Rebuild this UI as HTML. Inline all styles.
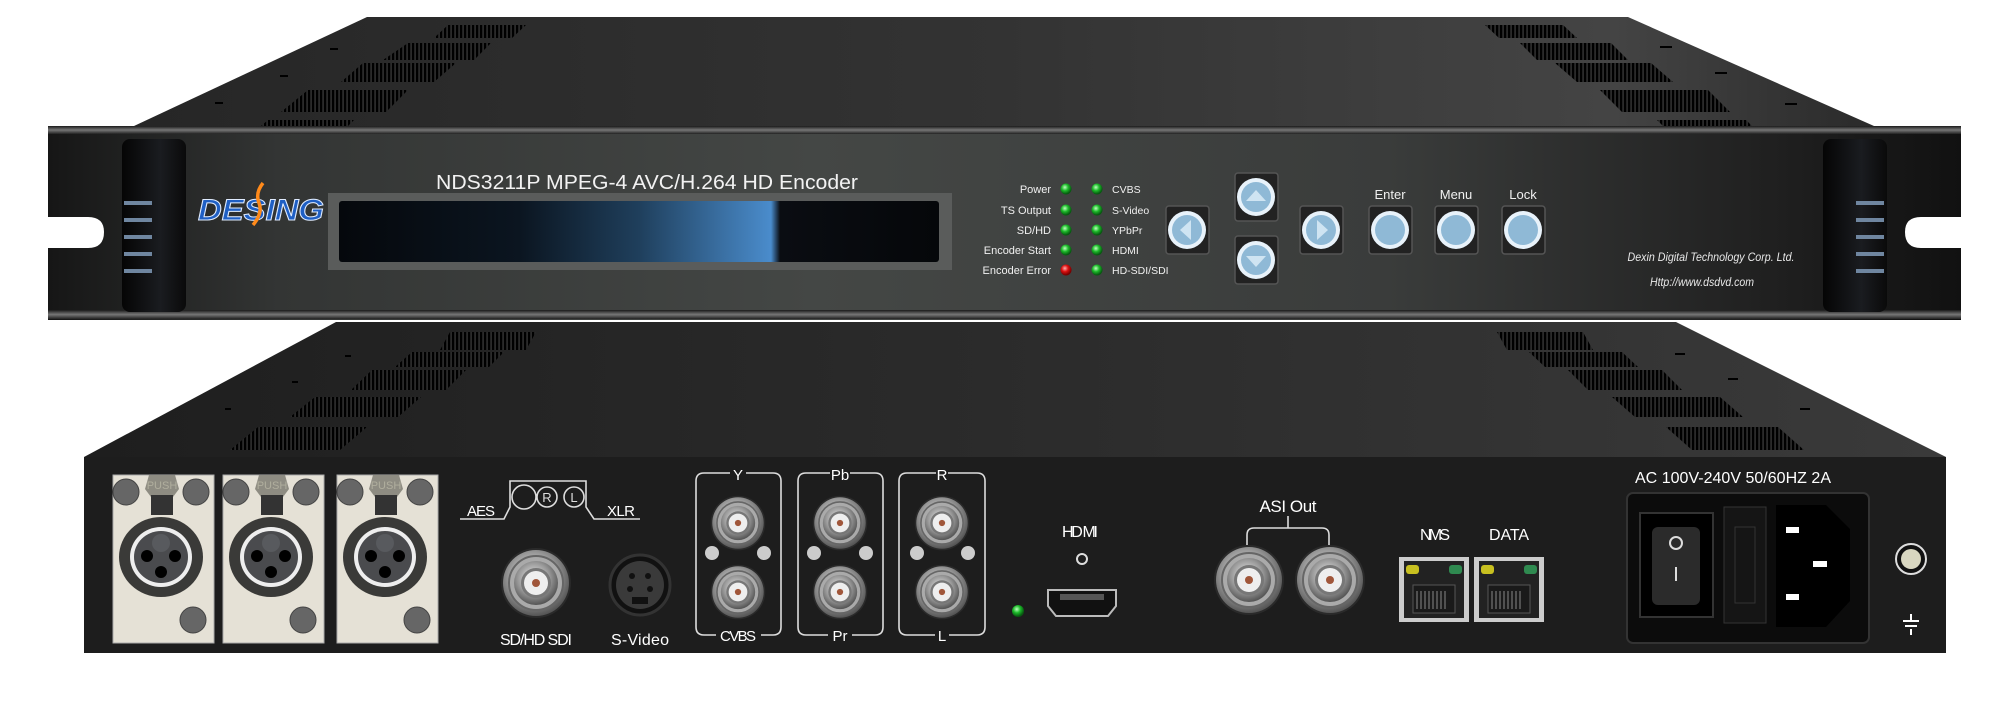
<!DOCTYPE html>
<html><head><meta charset="utf-8"><style>
html,body{margin:0;padding:0;background:#fff;width:2000px;height:701px;overflow:hidden}
svg{display:block}
text{font-family:"Liberation Sans",sans-serif}
</style></head><body>
<svg width="2000" height="701" viewBox="0 0 2000 701" xmlns="http://www.w3.org/2000/svg">
<defs>
<linearGradient id="lid" x1="0" y1="0" x2="1" y2="0">
<stop offset="0" stop-color="#262626"/><stop offset="0.5" stop-color="#333"/><stop offset="0.85" stop-color="#444"/><stop offset="1" stop-color="#2a2a2a"/></linearGradient>
<linearGradient id="lid2" x1="0" y1="0" x2="1" y2="0">
<stop offset="0" stop-color="#1e1e1e"/><stop offset="0.6" stop-color="#2e2e2e"/><stop offset="1" stop-color="#3a3a3a"/></linearGradient>
<linearGradient id="front" x1="0" y1="0" x2="1" y2="0">
<stop offset="0" stop-color="#161616"/><stop offset="0.12" stop-color="#333534"/><stop offset="0.4" stop-color="#444745"/><stop offset="0.7" stop-color="#3a3c3b"/><stop offset="0.9" stop-color="#202020"/><stop offset="1" stop-color="#111"/></linearGradient>
<linearGradient id="rail" x1="0" y1="0" x2="0" y2="1">
<stop offset="0" stop-color="#1a1a1a"/><stop offset="0.5" stop-color="#777"/><stop offset="1" stop-color="#222"/></linearGradient>
<linearGradient id="lcd" x1="0" y1="0" x2="1" y2="0">
<stop offset="0" stop-color="#05080c"/><stop offset="0.3" stop-color="#0b1520"/><stop offset="0.5" stop-color="#1f3f5c"/><stop offset="0.72" stop-color="#4a8ccc"/><stop offset="0.735" stop-color="#0a0d12"/><stop offset="1" stop-color="#05070a"/></linearGradient>
<linearGradient id="ear" x1="0" y1="0" x2="1" y2="0">
<stop offset="0" stop-color="#050505"/><stop offset="0.6" stop-color="#1a1c20"/><stop offset="1" stop-color="#0a0a0a"/></linearGradient>
<pattern id="vent" width="4" height="10" patternUnits="userSpaceOnUse"><rect width="4" height="10" fill="#2a2a2a"/><rect width="2.2" height="10" fill="#000"/></pattern>
<radialGradient id="bncg" cx="0.45" cy="0.4" r="0.6"><stop offset="0" stop-color="#eee"/><stop offset="0.6" stop-color="#999"/><stop offset="1" stop-color="#555"/></radialGradient>
<radialGradient id="led" cx="0.4" cy="0.35" r="0.6"><stop offset="0" stop-color="#bfffc0"/><stop offset="0.5" stop-color="#1dbb2a"/><stop offset="1" stop-color="#075a10"/></radialGradient>
<radialGradient id="ledr" cx="0.4" cy="0.35" r="0.6"><stop offset="0" stop-color="#ffb0b0"/><stop offset="0.5" stop-color="#dd1010"/><stop offset="1" stop-color="#700"/></radialGradient>
<g id="bnc">
<circle r="35" fill="#2a2a2a"/><circle r="33" fill="url(#bncg)"/><circle r="27" fill="#aaa" stroke="#666" stroke-width="2"/>
<circle r="22" fill="url(#bncg)"/><circle r="15" fill="#777"/><circle r="12" fill="#eee"/><circle r="4" fill="#a0563a"/></g>
<g id="btn"><rect x="-21" y="-24" width="43" height="48" rx="3" fill="#222" stroke="#555" stroke-width="1.5"/><circle r="19" fill="#e8f2fa"/><circle r="15" fill="#8fb9d6"/></g>
<g id="xlr">
<rect x="0" y="0" width="101" height="168" fill="#e5e1d6" stroke="#aaa"/>
<circle cx="13" cy="17" r="13" fill="#666" stroke="#444"/><circle cx="83" cy="17" r="13" fill="#666" stroke="#444"/><circle cx="80" cy="145" r="13" fill="#666" stroke="#444"/>
<path d="M36 0 h26 l4 14 -6 8 h-22 l-6 -8z" fill="#8e8c82"/><text x="49" y="14" font-size="11" fill="#b0ae9e" text-anchor="middle">PUSH</text>
<rect x="38" y="20" width="22" height="20" fill="#333"/>
<ellipse cx="48" cy="82" rx="42" ry="40" fill="#3a3a38"/><ellipse cx="48" cy="82" rx="31" ry="30" fill="#eee"/><ellipse cx="48" cy="82" rx="27" ry="26" fill="#4a4b4e"/>
<circle cx="48" cy="68" r="9" fill="#585a5e"/><circle cx="34" cy="81" r="6" fill="#000"/><circle cx="62" cy="81" r="6" fill="#000"/><circle cx="48" cy="97" r="6" fill="#000"/></g>
<g id="rj">
<rect width="70" height="65" fill="#ccc"/><rect x="5" y="4" width="60" height="57" fill="#222"/>
<rect x="7" y="8" width="13" height="9" rx="3" fill="#c8c020"/><rect x="50" y="8" width="13" height="9" rx="3" fill="#2f8a50"/>
<rect x="14" y="28" width="42" height="28" fill="#1a1a1a" stroke="#555"/><path d="M18 34v18M22 34v18M26 34v18M30 34v18M34 34v18M38 34v18M42 34v18M46 34v18" stroke="#888"/></g>
</defs>

<polygon points="367,17 1628,17 1874,126 134,126" fill="url(#lid)"/>
<g fill="url(#vent)">
<polygon points="448,25 526,25 512,38 434,38"/>
<polygon points="408,43 491,43 474,60 383,60"/>
<polygon points="363,63 456,63 434,82 341,82"/>
<polygon points="308,90 408,90 386,112 281,112"/>
<polygon points="268,120 354,120 348,126 261,126"/>
<polygon points="1485,25 1563,25 1577,38 1499,38"/>
<polygon points="1520,43 1611,43 1628,60 1537,60"/>
<polygon points="1555,63 1651,63 1673,82 1577,82"/>
<polygon points="1600,90 1708,90 1730,112 1622,112"/>
<polygon points="1657,120 1746,120 1752,126 1663,126"/>
</g>
<rect x="330" y="48" width="8" height="2" fill="#000"/><rect x="280" y="75" width="8" height="2" fill="#000"/><rect x="215" y="102" width="8" height="2" fill="#000"/>
<rect x="1660" y="46" width="12" height="2" fill="#000"/><rect x="1715" y="72" width="12" height="2" fill="#000"/><rect x="1785" y="103" width="12" height="2" fill="#000"/>

<polygon points="336,322 1676,322 1946,457 84,457" fill="url(#lid2)"/>
<g fill="url(#vent)">
<polygon points="450,332 536,332 526,350 440,350"/>
<polygon points="412,352 504,352 489,367 395,367"/>
<polygon points="372,370 466,370 446,390 351,390"/>
<polygon points="315,397 421,397 398,417 290,417"/>
<polygon points="258,427 367,427 340,450 230,450"/>
<polygon points="1497,332 1583,332 1593,350 1507,350"/>
<polygon points="1529,352 1622,352 1638,367 1545,367"/>
<polygon points="1568,370 1662,370 1682,390 1588,390"/>
<polygon points="1612,397 1720,397 1743,417 1635,417"/>
<polygon points="1666,427 1778,427 1804,450 1692,450"/>
</g>
<rect x="345" y="355" width="6" height="2" fill="#000"/><rect x="292" y="381" width="6" height="2" fill="#000"/><rect x="225" y="408" width="6" height="2" fill="#000"/>
<rect x="1675" y="353" width="10" height="2" fill="#000"/><rect x="1728" y="378" width="10" height="2" fill="#000"/><rect x="1800" y="408" width="10" height="2" fill="#000"/>

<rect x="84" y="457" width="1862" height="196" fill="#1d1d1d"/>
<use href="#xlr" x="113" y="475"/><use href="#xlr" x="223" y="475"/><use href="#xlr" x="337" y="475"/>
<g stroke="#ddd" stroke-width="1.6" fill="none">
<path d="M460 519 h44 l6 -12 v-26 h76 v26 l8 12 h46"/>
<circle cx="524" cy="497" r="12"/><circle cx="547" cy="497" r="10"/><circle cx="574" cy="497" r="10"/></g>
<text x="547" y="502" font-size="13" fill="#ddd" text-anchor="middle">R</text><text x="574" y="502" font-size="13" fill="#ddd" text-anchor="middle">L</text>
<text x="467" y="516" font-size="15" fill="#fff" textLength="28">AES</text><text x="607" y="516" font-size="15" fill="#fff" textLength="28">XLR</text>
<use href="#bnc" x="536" y="583"/>
<circle cx="640" cy="585" r="30" fill="#111" stroke="#333" stroke-width="3"/><circle cx="640" cy="585" r="24" fill="#3a3a3a"/><rect x="632" y="597" width="16" height="7" fill="#111"/>
<circle cx="632" cy="576" r="3" fill="#111"/><circle cx="648" cy="576" r="3" fill="#111"/><circle cx="630" cy="589" r="3" fill="#111"/><circle cx="650" cy="589" r="3" fill="#111"/>
<text x="536" y="645" font-size="16" fill="#fff" text-anchor="middle" textLength="72">SD/HD SDI</text>
<text x="640" y="645" font-size="16" fill="#fff" text-anchor="middle" textLength="58">S-Video</text>
<g stroke="#ddd" stroke-width="1.6" fill="none">
<path d="M730 473 h-26 q-8 0 -8 8 v146 q0 8 8 8 h12 M746 473 h27 q8 0 8 8 v146 q0 8 -8 8 h-12"/>
<path d="M830 473 h-24 q-8 0 -8 8 v146 q0 8 8 8 h22 M850 473 h25 q8 0 8 8 v146 q0 8 -8 8 h-23"/>
<path d="M936 473 h-29 q-8 0 -8 8 v146 q0 8 8 8 h28 M948 473 h29 q8 0 8 8 v146 q0 8 -8 8 h-28"/>
</g>
<text x="738" y="480" font-size="15" fill="#fff" text-anchor="middle">Y</text>
<text x="738" y="641" font-size="15" fill="#fff" text-anchor="middle" textLength="36">CVBS</text>
<text x="840" y="480" font-size="15" fill="#fff" text-anchor="middle">Pb</text>
<text x="840" y="641" font-size="15" fill="#fff" text-anchor="middle">Pr</text>
<text x="942" y="480" font-size="15" fill="#fff" text-anchor="middle">R</text>
<text x="942" y="641" font-size="15" fill="#fff" text-anchor="middle">L</text>
<use href="#bnc" transform="translate(738 523) scale(0.78)"/><use href="#bnc" transform="translate(738 592) scale(0.78)"/>
<use href="#bnc" transform="translate(840 523) scale(0.78)"/><use href="#bnc" transform="translate(840 592) scale(0.78)"/>
<use href="#bnc" transform="translate(942 523) scale(0.78)"/><use href="#bnc" transform="translate(942 592) scale(0.78)"/>
<g fill="#ccc"><circle cx="712" cy="553" r="7"/><circle cx="764" cy="553" r="7"/><circle cx="814" cy="553" r="7"/><circle cx="866" cy="553" r="7"/><circle cx="917" cy="553" r="7"/><circle cx="968" cy="553" r="7"/></g>
<text x="1080" y="537" font-size="16" fill="#fff" text-anchor="middle" textLength="36">HD MI</text>
<circle cx="1082" cy="559" r="5" fill="none" stroke="#ddd" stroke-width="2"/>
<path d="M1048 590 h68 v16 l-8 10 h-52 l-8 -10z" fill="#111" stroke="#bbb" stroke-width="2"/><rect x="1060" y="594" width="44" height="6" fill="#555"/>
<circle cx="1018" cy="611" r="6" fill="url(#led)"/>
<text x="1288" y="512" font-size="17" fill="#fff" text-anchor="middle" textLength="57">ASI Out</text>
<path d="M1288 516 v12 M1247 545 v-10 q0 -7 7 -7 h68 q7 0 7 7 v10" stroke="#ddd" stroke-width="1.6" fill="none"/>
<use href="#bnc" x="1249" y="580"/><use href="#bnc" x="1330" y="580"/>
<text x="1435" y="540" font-size="16" fill="#fff" text-anchor="middle" textLength="30">NMS</text>
<text x="1509" y="540" font-size="16" fill="#fff" text-anchor="middle" textLength="40">DATA</text>
<use href="#rj" x="1399" y="557"/><use href="#rj" x="1474" y="557"/>
<text x="1733" y="483" font-size="16" fill="#fff" text-anchor="middle" textLength="196">AC 100V-240V 50/60HZ 2A</text>
<rect x="1627" y="493" width="242" height="150" rx="6" fill="#0c0c0c" stroke="#333" stroke-width="2"/>
<rect x="1640" y="513" width="73" height="104" fill="#000" stroke="#333" stroke-width="2"/><rect x="1652" y="527" width="48" height="78" rx="6" fill="#2b2b2b"/>
<circle cx="1676" cy="543" r="6" fill="none" stroke="#ddd" stroke-width="2"/><path d="M1676 567 v14" stroke="#ddd" stroke-width="2"/>
<rect x="1724" y="507" width="42" height="116" fill="#151515" stroke="#333"/><rect x="1735" y="527" width="20" height="76" fill="none" stroke="#333"/>
<path d="M1776 505 h50 l24 24 v72 l-24 26 h-50z" fill="#000"/>
<rect x="1786" y="527" width="13" height="6" fill="#fff"/><rect x="1813" y="561" width="14" height="6" fill="#fff"/><rect x="1786" y="594" width="13" height="6" fill="#fff"/>
<circle cx="1911" cy="559" r="15" fill="#111" stroke="#ddd" stroke-width="2"/><circle cx="1911" cy="559" r="10" fill="#d8d6c0"/>
<path d="M1911 614 v6 M1903 621 h16 M1905 626 h12 M1911 629 v6" stroke="#fff" stroke-width="2"/>

<rect x="48" y="126" width="1913" height="194" fill="url(#front)"/>
<rect x="48" y="126" width="1913" height="8" fill="url(#rail)"/>
<rect x="48" y="310" width="1913" height="9" fill="url(#rail)"/>
<path d="M48 217 h40 q16 0 16 15 q0 16 -16 16 h-40z" fill="#fff"/>
<path d="M1961 217 h-40 q-16 0 -16 15 q0 16 16 16 h40z" fill="#fff"/>
<rect x="122" y="139" width="64" height="173" rx="8" fill="url(#ear)"/>
<rect x="1823" y="139" width="64" height="173" rx="8" fill="url(#ear)"/>
<g fill="#6f86a0"><rect x="124" y="201" width="28" height="4"/><rect x="124" y="218" width="28" height="4"/><rect x="124" y="235" width="28" height="4"/><rect x="124" y="252" width="28" height="4"/><rect x="124" y="269" width="28" height="4"/>
<rect x="1856" y="201" width="28" height="4"/><rect x="1856" y="218" width="28" height="4"/><rect x="1856" y="235" width="28" height="4"/><rect x="1856" y="252" width="28" height="4"/><rect x="1856" y="269" width="28" height="4"/></g>
<text x="198" y="220" font-size="30" font-weight="bold" font-style="italic" fill="#1f5fc4" stroke="#e0ecff" stroke-width="1" textLength="126" lengthAdjust="spacingAndGlyphs">DESING</text>
<path d="M263 183 q-8 10 -4 20 q4 10 -6 22" stroke="#ff8a1a" stroke-width="3.5" fill="none"/>
<text x="436" y="189" font-size="20" fill="#f2f2f2" textLength="422" lengthAdjust="spacingAndGlyphs">NDS3211P MPEG-4 AVC/H.264 HD Encoder</text>
<rect x="328" y="193" width="624" height="77" fill="#5a5c5b"/>
<rect x="339" y="201" width="600" height="61" rx="3" fill="url(#lcd)"/>
<g font-size="11" fill="#f0f0f0" text-anchor="end">
<text x="1051" y="193">Power</text><text x="1051" y="214">TS Output</text><text x="1051" y="234">SD/HD</text><text x="1051" y="254">Encoder Start</text><text x="1051" y="274">Encoder Error</text></g>
<g fill="url(#led)"><circle cx="1066" cy="189" r="5.5"/><circle cx="1066" cy="210" r="5.5"/><circle cx="1066" cy="230" r="5.5"/><circle cx="1066" cy="250" r="5.5"/>
<circle cx="1097" cy="189" r="5.5"/><circle cx="1097" cy="210" r="5.5"/><circle cx="1097" cy="230" r="5.5"/><circle cx="1097" cy="250" r="5.5"/><circle cx="1097" cy="270" r="5.5"/></g>
<circle cx="1066" cy="270" r="5.5" fill="url(#ledr)"/>
<g font-size="10.5" fill="#f0f0f0"><text x="1112" y="193">CVBS</text><text x="1112" y="214">S-Video</text><text x="1112" y="234">YPbPr</text><text x="1112" y="254">HDMI</text><text x="1112" y="274">HD-SDI/SDI</text></g>
<use href="#btn" x="1187" y="230"/><use href="#btn" x="1256" y="197"/><use href="#btn" x="1256" y="260"/><use href="#btn" x="1321" y="230"/>
<use href="#btn" x="1390" y="230"/><use href="#btn" x="1456" y="230"/><use href="#btn" x="1523" y="230"/>
<g fill="#cfe4f2"><path d="M1180 230 l11 -10 v20z"/><path d="M1328 230 l-11 -10 v20z"/><path d="M1256 190 l-10 11 h20z"/><path d="M1256 267 l-10 -11 h20z"/></g>
<g font-size="13" fill="#f0f0f0" text-anchor="middle"><text x="1390" y="199">Enter</text><text x="1456" y="199">Menu</text><text x="1523" y="199">Lock</text></g>
<g font-size="12" font-style="italic" fill="#e8e8e8" text-anchor="middle">
<text x="1711" y="261" textLength="167" lengthAdjust="spacingAndGlyphs">Dexin Digital Technology  Corp. Ltd.</text>
<text x="1702" y="286" textLength="104" lengthAdjust="spacingAndGlyphs">Http://www.dsdvd.com</text></g>
</svg>
</body></html>
